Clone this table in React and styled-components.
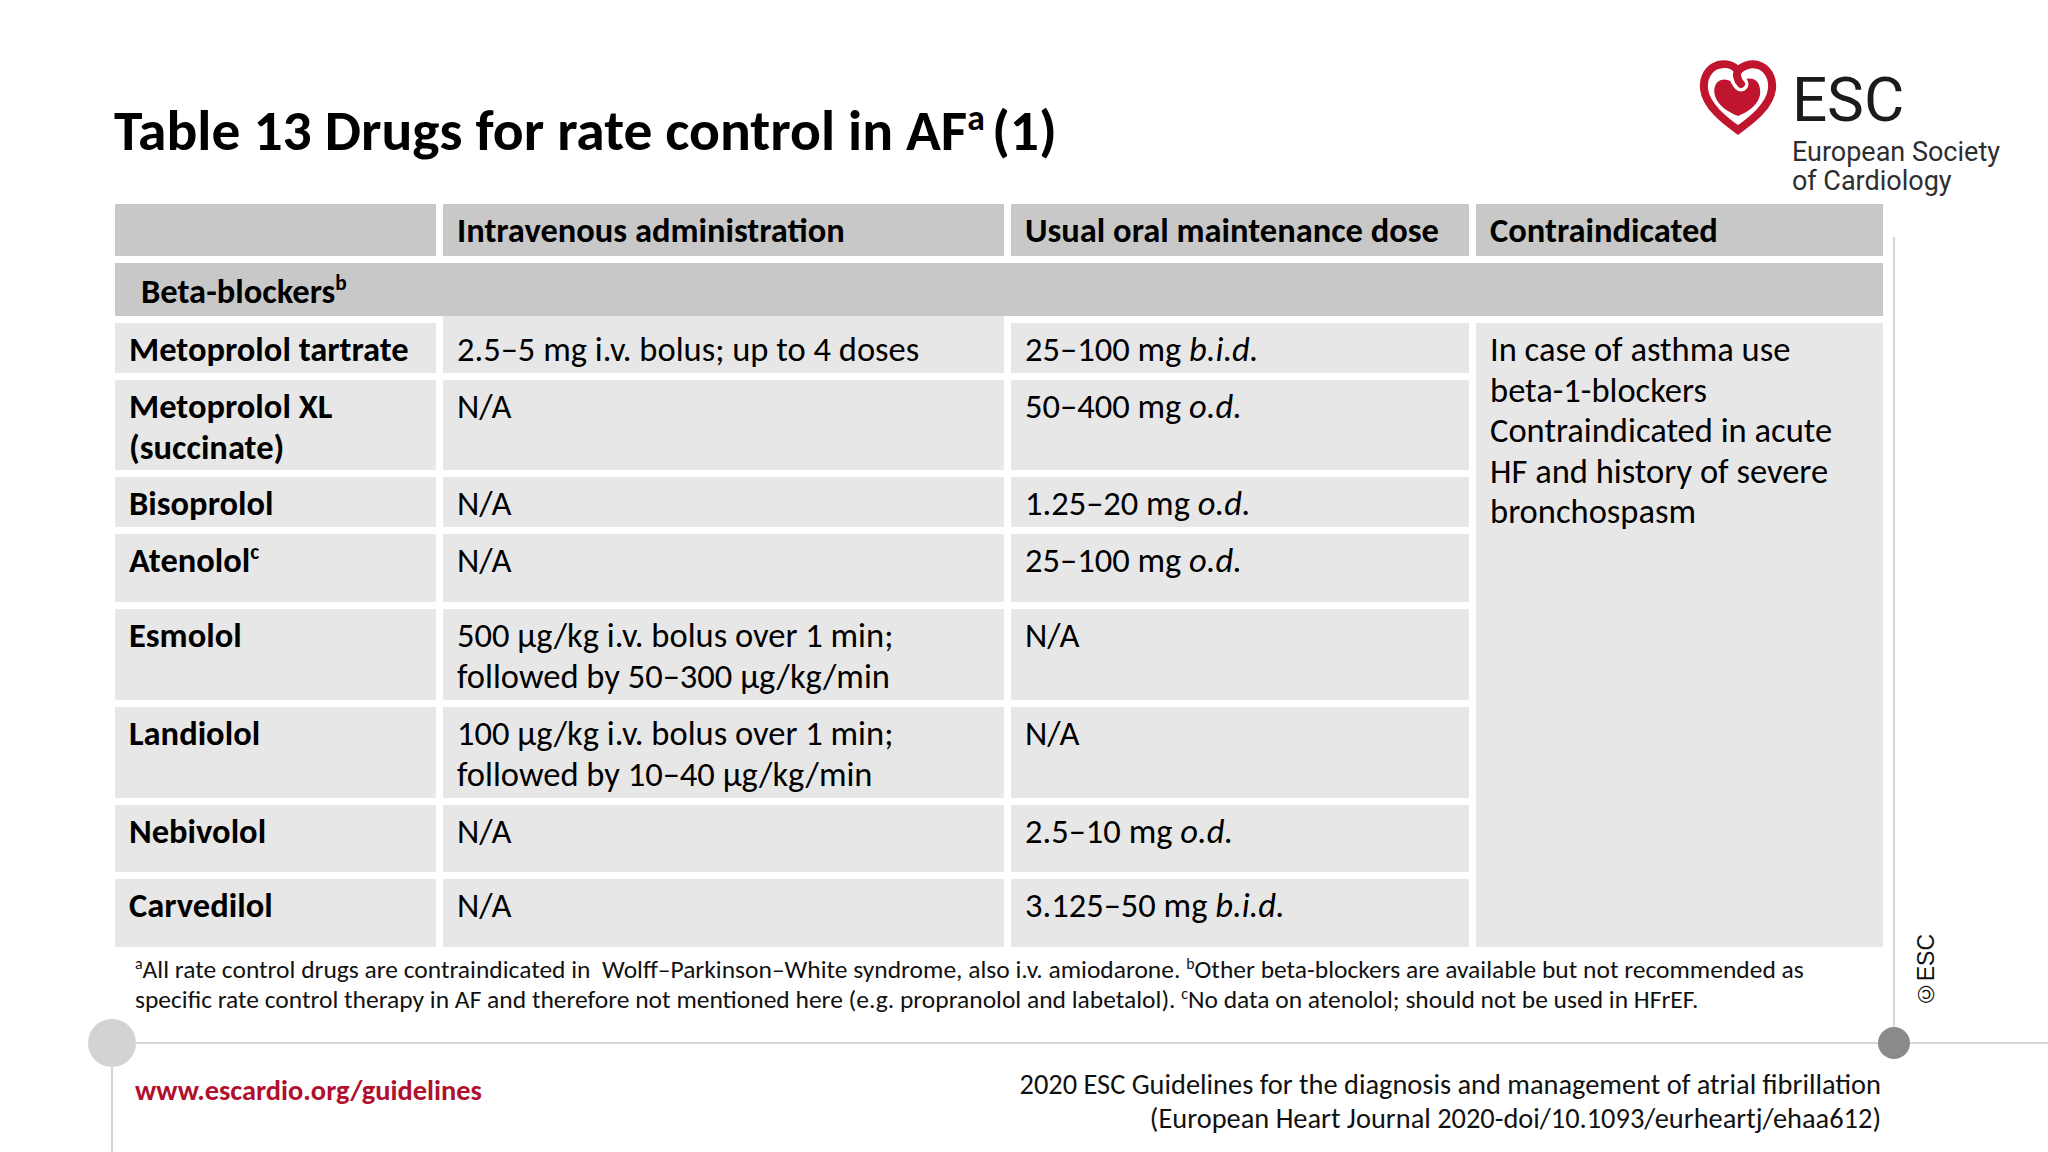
import React from "react";
import styled, { createGlobalStyle } from "styled-components";

const FONT = `Carlito, "Liberation Sans", Arial, sans-serif`;
const LINE = "#d6d6d6";
const RED = "#c0152f";

const GlobalStyle = createGlobalStyle`
  html, body {
    margin: 0;
    padding: 0;
    background: #fff;
  }
  body {
    font-family: ${FONT};
    color: #000;
  }
`;

const Slide = styled.div`
  width: 2048px;
  height: 1152px;
  overflow: hidden;
  display: flex;
  flex-direction: column;
  background: #fff;
`;

const Header = styled.header`
  height: 204px;
  flex-shrink: 0;
  display: flex;
  justify-content: space-between;
  align-items: flex-start;
`;

const Title = styled.h1`
  margin: 0;
  padding: 97px 0 0 114px;
  font-size: 57.5px;
  line-height: 66px;
  font-weight: 700;
  sup {
    font-size: 0.62em;
    line-height: 0;
    vertical-align: 0.55em;
    margin-right: 7px;
  }
`;

const Logo = styled.div`
  display: flex;
  align-items: flex-start;
  gap: 14px;
  margin: 58px 48px 0 0;
`;

const LogoText = styled.div`
  font-family: Roboto, "Liberation Sans", sans-serif;
  color: #1b1b1b;
  display: flex;
  flex-direction: column;
`;

const LogoMark = styled.div`
  font-size: 62px;
  line-height: 62px;
  margin-top: 11px;
`;

const LogoName = styled.div`
  font-size: 27px;
  line-height: 28.5px;
  margin-top: 7px;
  color: #2e2e2e;
`;

const Body = styled.main`
  height: 823px;
  flex-shrink: 0;
  display: flex;
`;

const Content = styled.div`
  padding-left: 115px;
  width: 1768px;
  flex-shrink: 0;
`;

const Table = styled.div`
  display: grid;
  grid-template-columns: 321px 561px 458px 407px;
  grid-template-rows: 52px 53px 50px 90px 50px 68px 91px 91px 67px 68px;
  gap: 7px;
`;

const Cell = styled.div`
  background: ${(p) => (p.$kind === "body" ? "#e7e7e7" : "#c8c8c8")};
  font-size: 34.5px;
  line-height: 40.5px;
  padding: ${(p) => (p.$kind === "group" ? "8px 14px 0 26px" : "6px 14px 0 14px")};
  font-weight: ${(p) => (p.$bold ? 700 : 400)};
  grid-column: ${(p) => (p.$wide ? "1 / -1" : p.$col || "auto")};
  grid-row: ${(p) => p.$rows || "auto"};
  box-shadow: ${(p) => (p.$joined ? "0 -7px 0 #e7e7e7" : "none")};
  sup {
    font-size: 0.62em;
    line-height: 0;
    vertical-align: 0.6em;
  }
  i {
    font-style: italic;
  }
`;

const Footnote = styled.p`
  margin: 8px 0 0 20px;
  font-size: 25.5px;
  line-height: 29.5px;
  color: #111;
  white-space: nowrap;
  sup {
    font-size: 0.62em;
    line-height: 0;
    vertical-align: 0.6em;
  }
`;

const Rail = styled.aside`
  flex: 1;
  margin: 33px 0 0 10px;
  border-left: 2px solid ${LINE};
  display: flex;
  flex-direction: column;
  justify-content: flex-end;
  padding: 0 0 20px 20px;
`;

const Copyright = styled.div`
  font-family: "Liberation Sans", Arial, sans-serif;
  font-size: 23px;
  line-height: 23px;
  writing-mode: vertical-rl;
  transform: rotate(180deg);
  color: #111;
  align-self: flex-start;
`;

const Divider = styled.div`
  height: 32px;
  flex-shrink: 0;
  display: flex;
  align-items: center;
`;

const Dot = styled.div`
  width: ${(p) => p.$size}px;
  height: ${(p) => p.$size}px;
  border-radius: 50%;
  background: ${(p) => p.$color};
  flex-shrink: 0;
  margin-left: ${(p) => p.$offset || 0}px;
`;

const Rule = styled.div`
  height: 2px;
  background: ${LINE};
  flex: ${(p) => (p.$width ? `0 0 ${p.$width}px` : "1")};
`;

const Footer = styled.footer`
  flex: 1;
  display: flex;
  justify-content: space-between;
  align-items: stretch;
`;

const SiteLink = styled.div`
  margin-left: 111px;
  border-left: 2px solid ${LINE};
  padding: 15px 0 0 22px;
  font-size: 28.4px;
  line-height: 34px;
  font-weight: 700;
  color: #b0102e;
`;

const Citation = styled.div`
  padding: 9px 167px 0 0;
  text-align: right;
  font-size: 28.4px;
  line-height: 33.5px;
  color: #111;
`;

function Heart() {
  const ring =
    "M43 26 C39 22 38 16 40 13 C36 7 28 5 20 7 C10 10 5 20 6 31 C8 48 26 62 40 72 C54 62 72 48 74 31 C75 20 70 10 60 7 C52 5 44 8 40 13";
  const inner =
    "M39 29 C35 23 28 20 23 22 C17 24 15 31 17 38 C20 48 30 54 40 58 C50 54 60 47 62 37 C63 30 61 23 55 21 C49 19 43 22 39 29 Z";
  return (
    <svg width="80" height="78" viewBox="0 0 80 78">
      <path d={inner} fill={RED} />
      <path d={ring} stroke="#fff" strokeWidth="15" fill="none" strokeLinecap="round" />
      <path d={ring} stroke={RED} strokeWidth="8" fill="none" strokeLinecap="round" />
    </svg>
  );
}

const rows = [
  {
    name: "Metoprolol tartrate",
    iv: "2.5–5 mg i.v. bolus; up to 4 doses",
    oral: (
      <>
        25–100 mg <i>b.i.d.</i>
      </>
    ),
  },
  {
    name: (
      <>
        Metoprolol XL
        <br />
        (succinate)
      </>
    ),
    iv: "N/A",
    oral: (
      <>
        50–400 mg <i>o.d.</i>
      </>
    ),
  },
  {
    name: "Bisoprolol",
    iv: "N/A",
    oral: (
      <>
        1.25–20 mg <i>o.d.</i>
      </>
    ),
  },
  {
    name: (
      <>
        Atenolol<sup>c</sup>
      </>
    ),
    iv: "N/A",
    oral: (
      <>
        25–100 mg <i>o.d.</i>
      </>
    ),
  },
  {
    name: "Esmolol",
    iv: (
      <>
        500 µg/kg i.v. bolus over 1 min;
        <br />
        followed by 50–300 µg/kg/min
      </>
    ),
    oral: "N/A",
  },
  {
    name: "Landiolol",
    iv: (
      <>
        100 µg/kg i.v. bolus over 1 min;
        <br />
        followed by 10–40 µg/kg/min
      </>
    ),
    oral: "N/A",
  },
  {
    name: "Nebivolol",
    iv: "N/A",
    oral: (
      <>
        2.5–10 mg <i>o.d.</i>
      </>
    ),
  },
  {
    name: "Carvedilol",
    iv: "N/A",
    oral: (
      <>
        3.125–50 mg <i>b.i.d.</i>
      </>
    ),
  },
];

export default function App() {
  return (
    <>
      <GlobalStyle />
      <Slide>
        <Header>
          <Title>
            Table 13 Drugs for rate control in AF<sup>a</sup>(1)
          </Title>
          <Logo>
            <Heart />
            <LogoText>
              <LogoMark>ESC</LogoMark>
              <LogoName>
                European Society
                <br />
                of Cardiology
              </LogoName>
            </LogoText>
          </Logo>
        </Header>

        <Body>
          <Content>
            <Table>
              <Cell $kind="head" />
              <Cell $kind="head" $bold>
                Intravenous administration
              </Cell>
              <Cell $kind="head" $bold>
                Usual oral maintenance dose
              </Cell>
              <Cell $kind="head" $bold>
                Contraindicated
              </Cell>
              <Cell $kind="group" $bold $wide>
                Beta-blockers<sup>b</sup>
              </Cell>
              {rows.map((r, i) => (
                <React.Fragment key={i}>
                  <Cell $kind="body" $bold>
                    {r.name}
                  </Cell>
                  <Cell $kind="body" $joined={i === 0}>
                    {r.iv}
                  </Cell>
                  <Cell $kind="body">{r.oral}</Cell>
                  {i === 0 && (
                    <Cell $kind="body" $col="4" $rows="3 / span 8">
                      In case of asthma use
                      <br />
                      beta-1-blockers
                      <br />
                      Contraindicated in acute
                      <br />
                      HF and history of severe
                      <br />
                      bronchospasm
                    </Cell>
                  )}
                </React.Fragment>
              ))}
            </Table>
            <Footnote>
              <sup>a</sup>All rate control drugs are contraindicated in&nbsp; Wolff–Parkinson–White syndrome, also i.v.
              amiodarone. <sup>b</sup>Other beta-blockers are available but not recommended as
              <br />
              specific rate control therapy in AF and therefore not mentioned here (e.g. propranolol and labetalol).{" "}
              <sup>c</sup>No data on atenolol; should not be used in HFrEF.
            </Footnote>
          </Content>
          <Rail>
            <Copyright>©ESC</Copyright>
          </Rail>
        </Body>

        <Divider>
          <Dot $size={48} $color="#d3d3d3" $offset={88} />
          <Rule />
          <Dot $size={32} $color="#8a8a8a" />
          <Rule $width={138} />
        </Divider>

        <Footer>
          <SiteLink>www.escardio.org/guidelines</SiteLink>
          <Citation>
            2020 ESC Guidelines for the diagnosis and management of atrial fibrillation
            <br />
            (European Heart Journal 2020-doi/10.1093/eurheartj/ehaa612)
          </Citation>
        </Footer>
      </Slide>
    </>
  );
}
